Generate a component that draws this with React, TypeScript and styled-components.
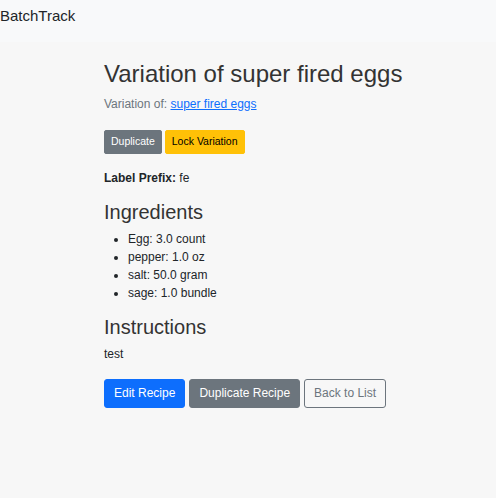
import React from "react";
import styled, { createGlobalStyle } from "styled-components";

const Global = createGlobalStyle`
  html, body { margin: 0; padding: 0; }
  body {
    background: #f7f7f7;
    font-family: "Liberation Sans", Arial, sans-serif;
    font-size: 12px;
    line-height: 1.5;
    color: #212529;
  }
`;

const Navbar = styled.nav`
  background: #f8f9fa;
  height: 42px;
  box-sizing: border-box;
  padding-top: 5px;
  display: flex;
  align-items: flex-start;
`;

const Brand = styled.a`
  font-size: 15px;
  color: #212529;
  text-decoration: none;
  line-height: 22px;
`;

const Main = styled.main`
  padding: 18px 0 0 104px;
`;

const Title = styled.h2`
  font-size: 24px;
  font-weight: 500;
  line-height: 1.2;
  margin: 0 0 6px;
  color: #333;
`;

const Muted = styled.p`
  color: #6c757d;
  margin: 0 0 17px;
`;

const Link = styled.a`
  color: #0d6efd;
  text-decoration: underline;
`;

const ButtonRow = styled.div<{ $gap: number }>`
  display: flex;
  gap: ${(p) => p.$gap}px;
`;

const variants = {
  primary: "background:#0d6efd;border-color:#0d6efd;color:#fff;",
  secondary: "background:#6c757d;border-color:#6c757d;color:#fff;",
  warning: "background:#ffc107;border-color:#ffc107;color:#000;",
  outline: "background:transparent;border-color:#6c757d;color:#6c757d;",
};

const Button = styled.button<{ $variant: keyof typeof variants; $small?: boolean }>`
  font-family: inherit;
  border: 1px solid;
  border-radius: ${(p) => (p.$small ? "2px" : "3px")};
  font-size: ${(p) => (p.$small ? "10.5px" : "12px")};
  line-height: ${(p) => (p.$small ? "15.75px" : "18px")};
  padding: ${(p) => (p.$small ? "3px 6px" : "4.5px 9px")};
  cursor: pointer;
  ${(p) => variants[p.$variant]}
`;

const Prefix = styled.p`
  margin: 15px 0 13px;
`;

const Heading = styled.h3`
  font-size: 20px;
  font-weight: 500;
  line-height: 1.2;
  margin: 0 0 6px;
  color: #333;
`;

const List = styled.ul`
  margin: 0 0 13px;
  padding-left: 24px;
`;

const Text = styled.p`
  margin: 0 0 16px;
`;

export default function App() {
  return (
    <>
      <Global />
      <Navbar>
        <Brand href="#">BatchTrack</Brand>
      </Navbar>
      <Main>
        <Title>Variation of super fired eggs</Title>
        <Muted>
          Variation of: <Link href="#">super fired eggs</Link>
        </Muted>
        <ButtonRow $gap={3}>
          <Button $small $variant="secondary">Duplicate</Button>
          <Button $small $variant="warning">Lock Variation</Button>
        </ButtonRow>
        <Prefix>
          <strong>Label Prefix:</strong> fe
        </Prefix>
        <Heading>Ingredients</Heading>
        <List>
          <li>Egg: 3.0 count</li>
          <li>pepper: 1.0 oz</li>
          <li>salt: 50.0 gram</li>
          <li>sage: 1.0 bundle</li>
        </List>
        <Heading>Instructions</Heading>
        <Text>test</Text>
        <ButtonRow $gap={4}>
          <Button $variant="primary">Edit Recipe</Button>
          <Button $variant="secondary">Duplicate Recipe</Button>
          <Button $variant="outline">Back to List</Button>
        </ButtonRow>
      </Main>
    </>
  );
}
